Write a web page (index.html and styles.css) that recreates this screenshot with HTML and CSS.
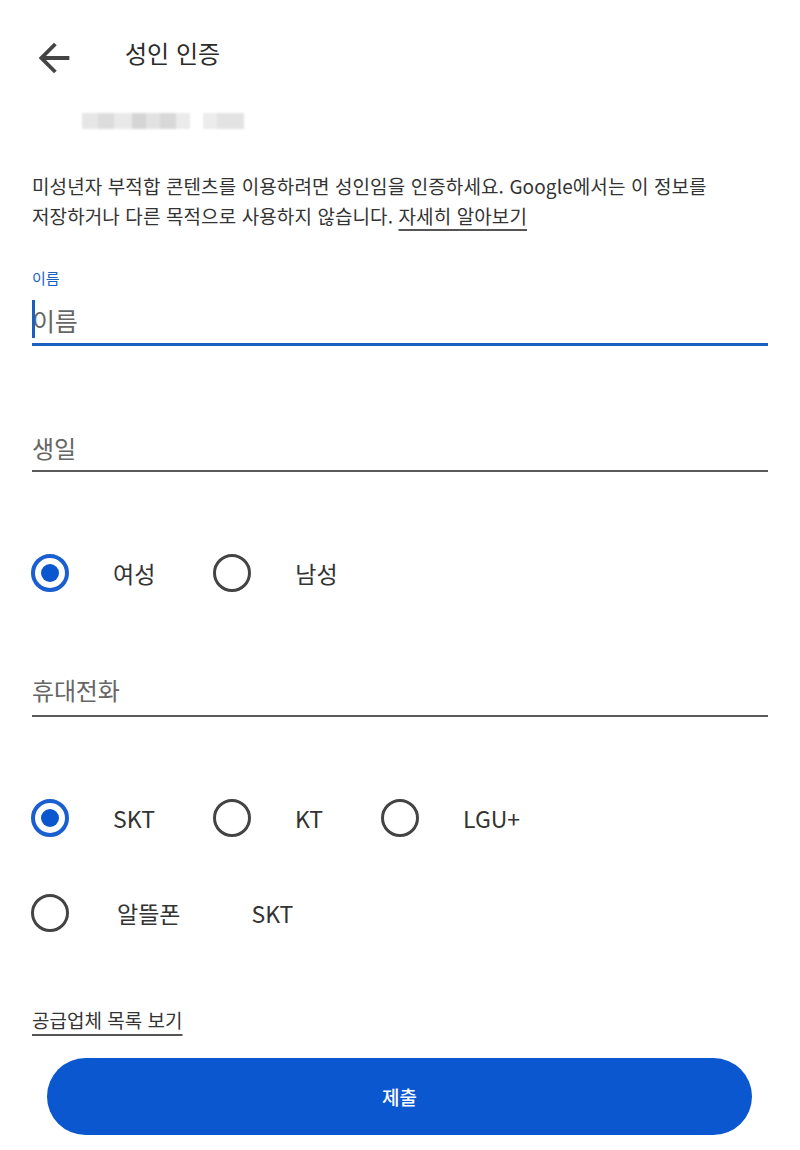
FILE: index.html
```html
<!DOCTYPE html>
<html lang="ko">
<head>
<meta charset="utf-8">
<title>성인 인증</title>
<link rel="stylesheet" href="styles.css">
</head>
<body>
<header class="topbar">
  <svg class="back" viewBox="0 0 24 24" aria-hidden="true"><path d="M20 11H7.83l5.59-5.59L12 4l-8 8 8 8 1.41-1.41L7.83 13H20v-2z"/></svg>
  <h1 class="title">성인 인증</h1>
</header>
<div class="account">
  <span class="px p1"></span><span class="px p2"></span><span class="px p3"></span><span class="px p4"></span><span class="px p5"></span><span class="px p6"></span><span class="px p7"></span><span class="gap"></span><span class="px p8"></span><span class="px p9"></span>
</div>
<main class="content">
  <p class="desc">미성년자 부적합 콘텐츠를 이용하려면 성인임을 인증하세요. Google에서는 이 정보를<br>저장하거나 다른 목적으로 사용하지 않습니다. <a class="ulink">자세히 알아보기</a></p>

  <div class="label-active">이름</div>
  <div class="field active"><span class="caret"></span><span class="ph">이름</span></div>

  <div class="field birth"><span class="ph">생일</span></div>

  <div class="radios gender">
    <div class="opt"><span class="radio on"></span><span class="rlabel">여성</span></div>
    <div class="opt"><span class="radio"></span><span class="rlabel">남성</span></div>
  </div>

  <div class="field phone"><span class="ph">휴대전화</span></div>

  <div class="radios carrier1">
    <div class="opt"><span class="radio on"></span><span class="rlabel">SKT</span></div>
    <div class="opt"><span class="radio"></span><span class="rlabel">KT</span></div>
    <div class="opt"><span class="radio"></span><span class="rlabel">LGU+</span></div>
  </div>

  <div class="radios carrier2">
    <div class="opt"><span class="radio"></span><span class="rlabel mvno">알뜰폰</span><span class="rlabel sub">SKT</span></div>
  </div>

  <a class="ulink providers">공급업체 목록 보기</a>

  <button class="submit">제출</button>
</main>
</body>
</html>
```

FILE: styles.css
```css
* { box-sizing: border-box; }
body {
  margin: 0;
  background: #fff;
  font-family: "Noto Sans CJK KR", "Noto Sans", Roboto, sans-serif;
  color: #333;
}
.topbar {
  height: 104px;
  display: flex;
  align-items: center;
}
.back {
  width: 46px;
  height: 46px;
  margin-left: 31px;
  margin-top: 12px;
  fill: #444;
}
.title {
  margin: 0 0 0 48px;
  font-size: 24px;
  font-weight: 400;
  letter-spacing: 0;
  color: #2b2b2b;
}
.account {
  display: flex;
  height: 16px;
  margin: 9px 0 0 82px;
  filter: blur(1.2px);
}
.px { display: block; height: 16px; }
.p1 { width: 16px; background: #e6e6e6; }
.p2 { width: 16px; background: #dcdcdc; }
.p3 { width: 18px; background: #e9e9e9; }
.p4 { width: 14px; background: #d5d5d5; }
.p5 { width: 14px; background: #e2e2e2; }
.p6 { width: 16px; background: #d8d8d8; }
.p7 { width: 14px; background: #ebebeb; }
.gap { width: 13px; }
.p8 { width: 14px; background: #ececec; }
.p9 { width: 27px; background: #e3e3e3; }
.content {
  padding: 0 32px;
  display: flex;
  flex-direction: column;
  align-items: flex-start;
}
.desc {
  margin: 42px 0 0;
  font-size: 19px;
  line-height: 30px;
  letter-spacing: 0.1px;
  color: #333;
  white-space: nowrap;
}
.ulink {
  color: #333;
  text-decoration: underline;
  text-decoration-color: #555;
  text-underline-offset: 5px;
  text-decoration-thickness: 1.5px;
}
.label-active {
  margin-top: 37px;
  font-size: 15px;
  line-height: 20px;
  color: #1b5fbf;
}
.field {
  align-self: stretch;
  display: flex;
  align-items: center;
  position: relative;
  border-bottom: 2px solid #5a5a5a;
}
.ph {
  font-size: 24px;
  line-height: 36px;
  color: #666;
  letter-spacing: -0.2px;
}
.field.active {
  border-bottom: 3px solid #1b5fbf;
  padding-bottom: 5px;
  margin-top: 14px;
}
.field.active .ph { font-size: 25px; }
.caret {
  position: absolute;
  left: 0;
  top: -2px;
  width: 3px;
  height: 38px;
  background: #1b5fbf;
}
.field.birth {
  margin-top: 84px;
  padding-bottom: 4px;
}
.field.phone {
  margin-top: 80px;
  padding-bottom: 7px;
}
.radios {
  display: flex;
  gap: 58px;
  margin-left: -1px;
}
.gender { margin-top: 82px; }
.carrier1 { margin-top: 82px; }
.carrier2 { margin-top: 57px; }
.opt {
  display: flex;
  align-items: center;
  gap: 44px;
}
.radio {
  width: 38px;
  height: 38px;
  border-radius: 50%;
  border: 3.5px solid #444;
  display: flex;
  align-items: center;
  justify-content: center;
  flex-shrink: 0;
}
.radio.on { border: 4px solid #1a5fd0; }
.radio.on::after {
  content: "";
  width: 18px;
  height: 18px;
  border-radius: 50%;
  background: #0b57d0;
}
.rlabel {
  font-size: 23px;
  line-height: 32px;
  color: #333;
}
.rlabel.mvno { margin-left: 4px; }
.rlabel.sub { margin-left: 27px; }
.providers {
  margin-top: 76px;
  font-size: 19px;
  line-height: 24px;
  text-underline-offset: 6px;
}
.submit {
  margin: 26px 0 0 15px;
  width: 705px;
  height: 77px;
  border: none;
  border-radius: 39px;
  background: #0b57d0;
  color: #fff;
  font-family: "Noto Sans CJK KR", sans-serif;
  font-size: 19px;
  font-weight: 500;
  cursor: pointer;
}
```
